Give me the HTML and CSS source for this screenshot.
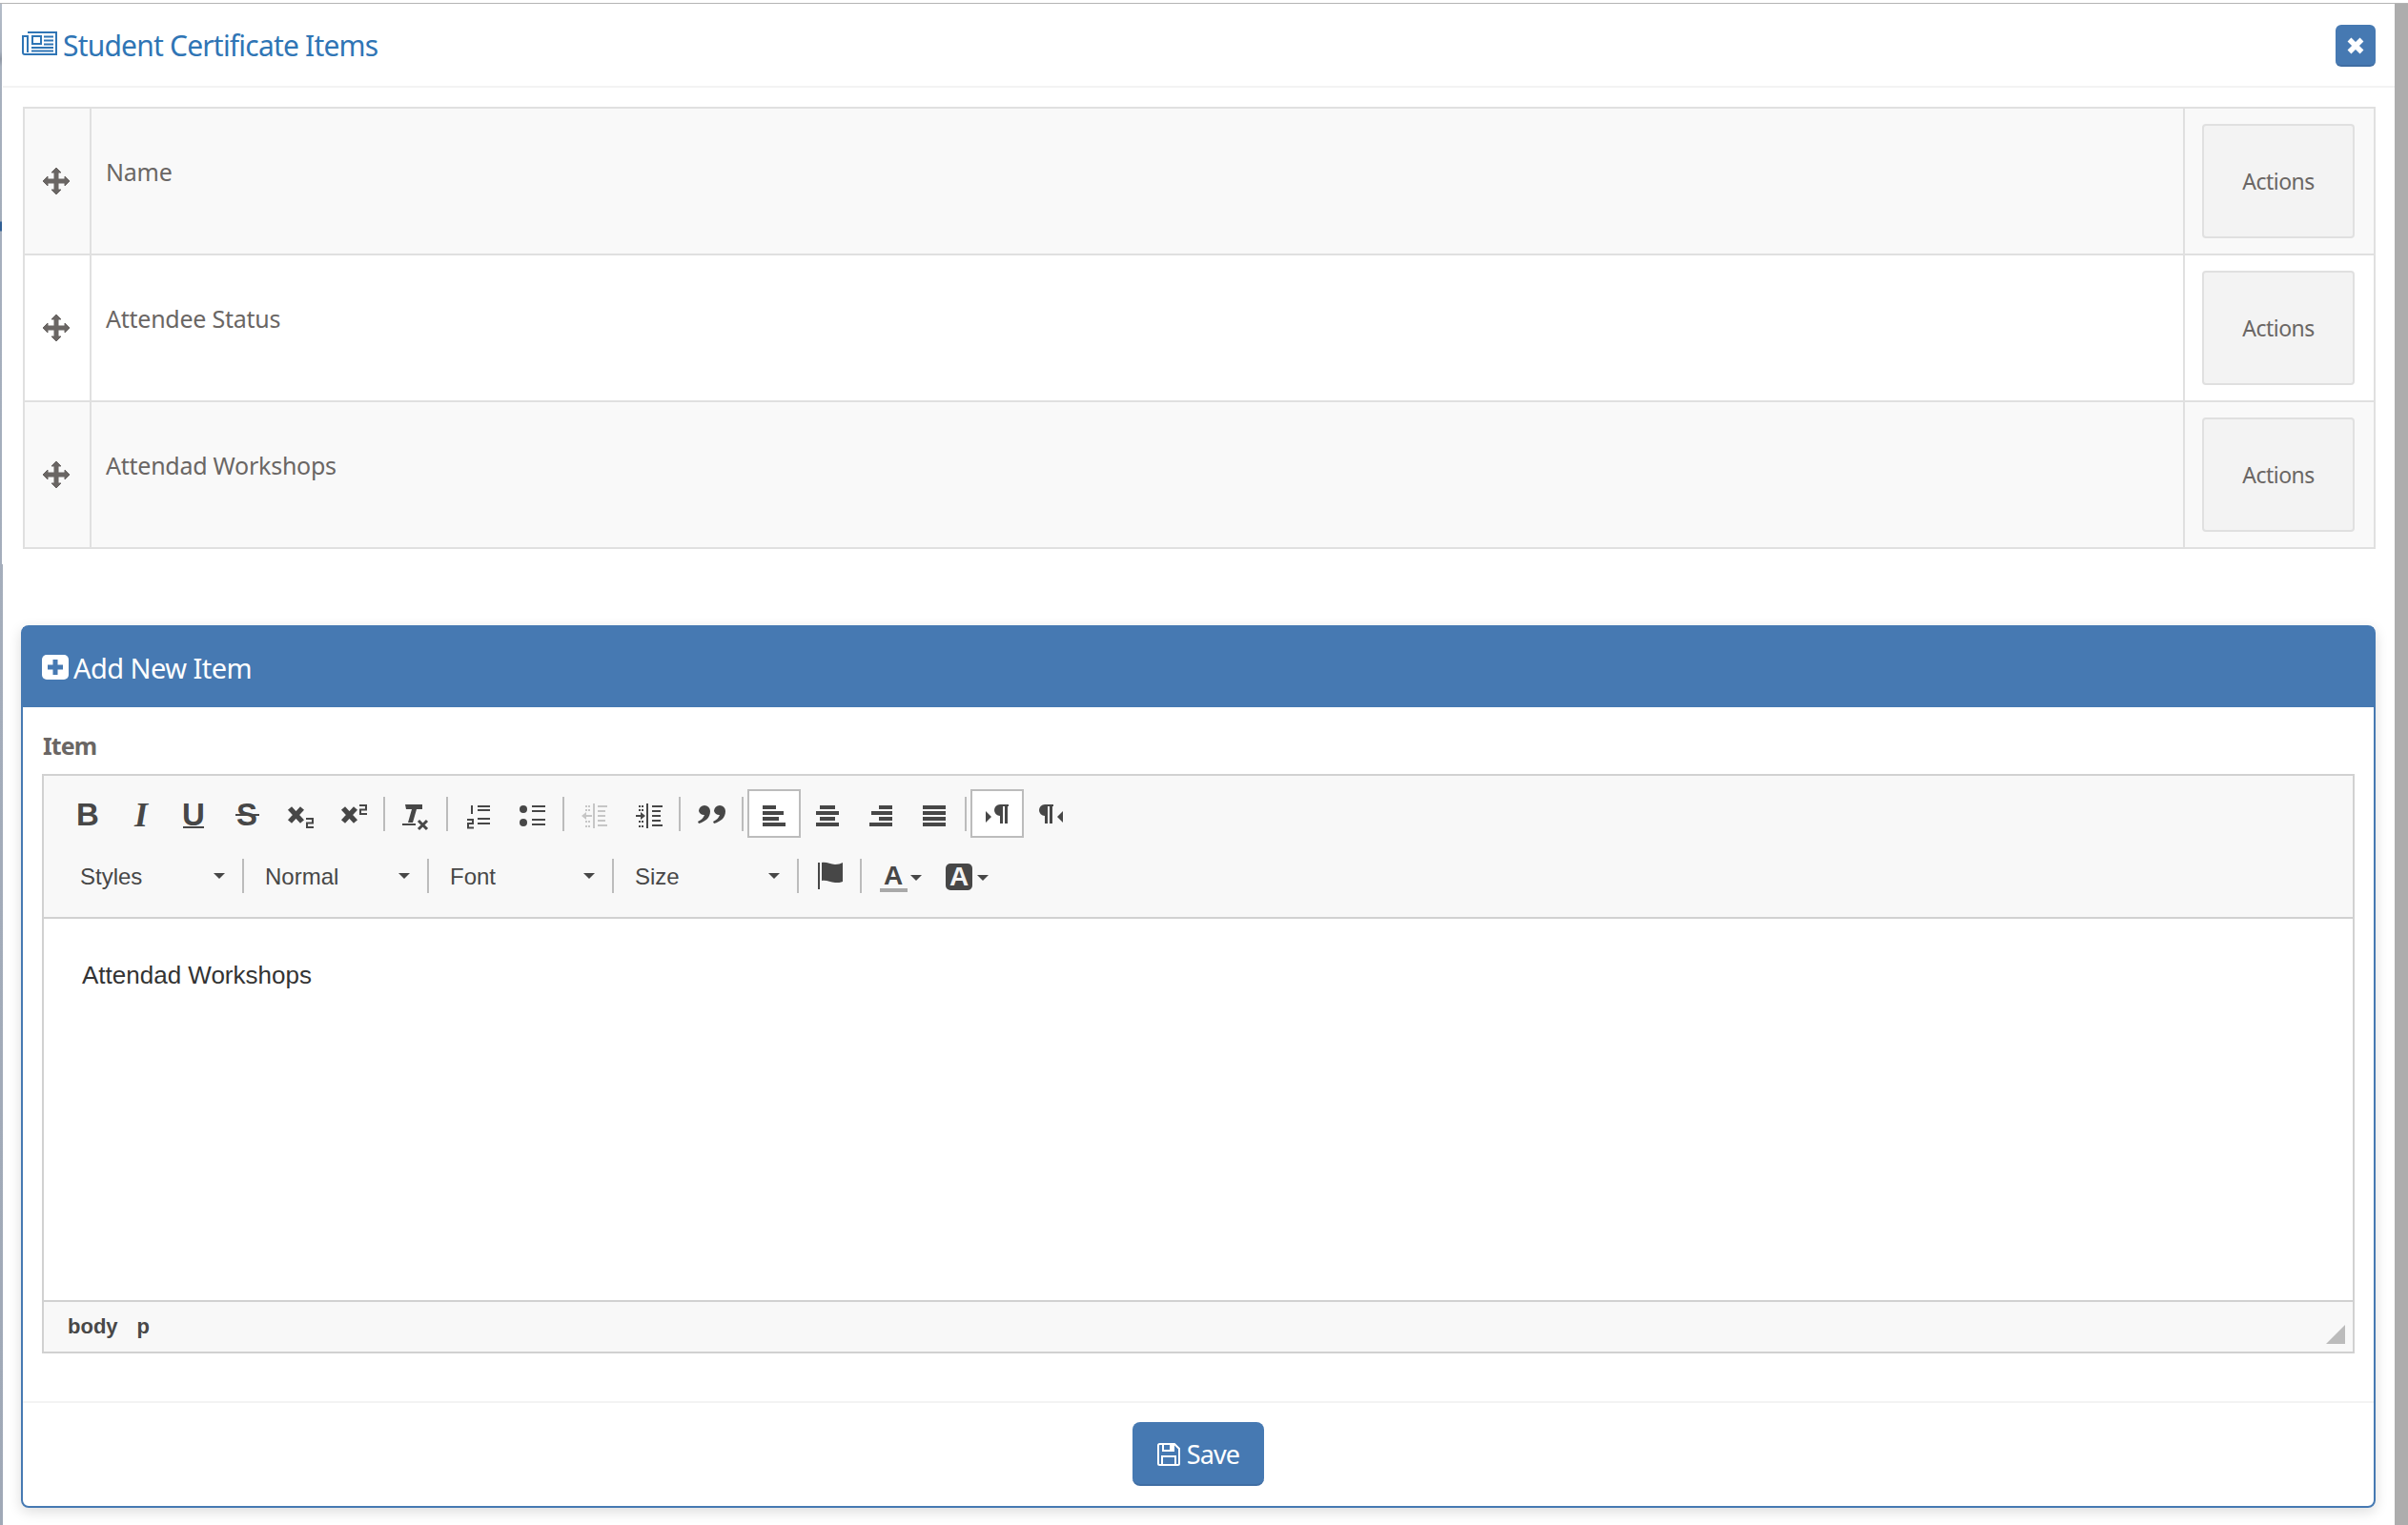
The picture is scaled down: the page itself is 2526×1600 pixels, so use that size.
FILE: index.html
```html
<!DOCTYPE html>
<html lang="en">
<head>
<meta charset="utf-8">
<title>Student Certificate Items</title>
<link rel="stylesheet" href="styles.css">
</head>
<body>
<div class="screen">
  <div class="backdrop"></div>
  <main class="modal">
    <header class="modal-head">
      <h1 class="title">
        <svg class="news" viewBox="0 0 37 26"><path d="M6 2h30v23H3a2 2 0 0 1-2-2V6h5v17" fill="none" stroke="currentColor" stroke-width="2"/><rect x="11" y="6" width="9" height="8" fill="none" stroke="currentColor" stroke-width="2"/><path d="M23 6.500h10M23 10.500h10M23 14.500h10M10 18h23M10 21.500h23" stroke="currentColor" stroke-width="2"/></svg>
        Student Certificate Items
      </h1>
      <button class="close" type="button" aria-label="Close"><svg viewBox="-9 -9 18 18" class="close-x"><path d="M-6.500 -6.500L6.500 6.500M6.500 -6.500L-6.500 6.500" stroke="#fff" stroke-width="5.500"/></svg></button>
    </header>

    <section class="items">
      <div class="row odd">
        <div class="cell handle"><svg class="move" viewBox="-14 -14 28 28"><use href="#move"/></svg></div>
        <div class="cell name">Name</div>
        <div class="cell act"><button class="actions" type="button">Actions</button></div>
      </div>
      <div class="row">
        <div class="cell handle"><svg class="move" viewBox="-14 -14 28 28"><use href="#move"/></svg></div>
        <div class="cell name">Attendee Status</div>
        <div class="cell act"><button class="actions" type="button">Actions</button></div>
      </div>
      <div class="row odd">
        <div class="cell handle"><svg class="move" viewBox="-14 -14 28 28"><use href="#move"/></svg></div>
        <div class="cell name">Attendad Workshops</div>
        <div class="cell act"><button class="actions" type="button">Actions</button></div>
      </div>
    </section>

    <section class="panel">
      <h2 class="panel-head">
        <svg class="plus" viewBox="0 0 28 26"><rect width="28" height="26" rx="5" fill="#fff"/><path d="M14 5v16M6 13h16" stroke="#4679b2" stroke-width="5"/></svg>
        Add New Item
      </h2>
      <div class="panel-body">
        <label class="label">Item</label>
        <div class="editor">
          <div class="toolbar">
            <div class="tool-row">
              <span class="btn"><svg class="ic" viewBox="-20 -20 40 40"><text class="g-b" x="0" y="12">B</text></svg></span>
              <span class="btn"><svg class="ic" viewBox="-20 -20 40 40"><text class="g-i" x="0" y="13">I</text></svg></span>
              <span class="btn"><svg class="ic" viewBox="-20 -20 40 40"><text class="g-b" x="-1" y="12">U</text><rect x="-12" y="13" width="22" height="2"/></svg></span>
              <span class="btn"><svg class="ic" viewBox="-20 -20 40 40"><text class="g-b" x="-1" y="12">S</text><rect x="-13" y="0" width="25" height="2"/></svg></span>
              <span class="btn"><svg class="ic" viewBox="-20 -20 40 40"><path class="st5" d="M-12 -6L1 8M1 -6L-12 8"/><path class="st2" d="M5 5h7v4.500h-6v4.500h7"/></svg></span>
              <span class="btn btn-last"><svg class="ic" viewBox="-20 -20 40 40"><path class="st5" d="M-12 -6L1 8M1 -6L-12 8"/><path class="st2" d="M5 -9h7v4.500h-6v4.500h7"/></svg></span>
              <i class="sep"></i>
              <span class="btn"><svg class="ic" viewBox="-20 -20 40 40"><path d="M-11 -10h18v5h-6l-4 14h-5l4 -14h-6z"/><rect x="-14" y="10" width="14" height="2"/><path class="st3" d="M3 7L12 16M12 7L3 16"/></svg></span>
              <i class="sep"></i>
              <span class="btn"><svg class="ic" viewBox="-20 -20 40 40"><path class="st2" d="M-7 -9v9M-1 -8h13M-1 -4h13M-1 5h13M-1 10h13M-12 6h6v4h-5v4.500h6"/></svg></span>
              <span class="btn"><svg class="ic" viewBox="-20 -20 40 40"><circle cx="-9" cy="-5" r="4"/><circle cx="-9" cy="9" r="4"/><path class="st2" d="M0 -8h14M0 -3h14M0 6h14M0 11h14"/></svg></span>
              <i class="sep"></i>
              <span class="btn"><svg class="ic off" viewBox="-20 -20 40 40"><path class="st2" d="M-1 -11v26M3 -8h10M3 -3h8M3 2h8M3 7h8M3 12h10"/><path class="st2" d="M-3 2h-8"/><path d="M-14 2l5 -4v8z"/><path class="dots" d="M-10 -8h5M-10 -4h5M-10 8h5M-10 13h5"/></svg></span>
              <span class="btn"><svg class="ic" viewBox="-20 -20 40 40"><path class="st2" d="M-1 -11v26M4 -8h11M4 -3h9M4 2h9M4 7h9M4 12h11"/><path class="st2" d="M-13 2h7"/><path d="M-3 2l-5 -4v8z"/><path class="dots" d="M-10 -8h5M-10 -4h5M-10 8h5M-10 13h5"/></svg></span>
              <i class="sep"></i>
              <span class="btn"><svg class="ic" viewBox="-20 -20 40 40"><path d="M-7 -9a6 6 0 0 1 6 6c0 7-5 11-12 13l-1-2c4-2 6-4 7-7a6 6 0 0 1-6-4a6 6 0 0 1 6-6z"/><path d="M9 -9a6 6 0 0 1 6 6c0 7-5 11-12 13l-1-2c4-2 6-4 7-7a6 6 0 0 1-6-4a6 6 0 0 1 6-6z"/></svg></span>
              <i class="sep"></i>
              <span class="btn on"><svg class="ic" viewBox="-20 -20 40 40"><rect x="-12" y="-9" width="14" height="4"/><rect x="-12" y="-3" width="22" height="4"/><rect x="-12" y="3" width="17" height="4"/><rect x="-12" y="9" width="24" height="4"/></svg></span>
              <span class="btn"><svg class="ic" viewBox="-20 -20 40 40"><rect x="-8" y="-9" width="16" height="4"/><rect x="-12" y="-3" width="24" height="4"/><rect x="-8" y="3" width="16" height="4"/><rect x="-12" y="9" width="24" height="4"/></svg></span>
              <span class="btn"><svg class="ic" viewBox="-20 -20 40 40"><rect x="-2" y="-9" width="14" height="4"/><rect x="-10" y="-3" width="22" height="4"/><rect x="-2" y="3" width="14" height="4"/><rect x="-12" y="9" width="24" height="4"/></svg></span>
              <span class="btn"><svg class="ic" viewBox="-20 -20 40 40"><rect x="-12" y="-9" width="24" height="4"/><rect x="-12" y="-3" width="24" height="4"/><rect x="-12" y="3" width="24" height="4"/><rect x="-12" y="9" width="24" height="4"/></svg></span>
              <i class="sep"></i>
              <span class="btn on"><svg class="ic" viewBox="-20 -20 40 40"><path d="M-12 -3l6 6l-6 6z"/><path d="M12 -10h-9a6 6 0 0 0 0 12h0v8h3v-18h2v18h3v-18h1z"/></svg></span>
              <span class="btn"><svg class="ic" viewBox="-20 -20 40 40"><path d="M13 -3l-6 6l6 6z"/><path d="M3 -10h-9a6 6 0 0 0 0 12h0v8h3v-18h2v18h3v-18h1z"/></svg></span>
            </div>
            <div class="tool-row row2">
              <span class="combo">Styles<i class="caret"></i></span>
              <i class="sep"></i>
              <span class="combo combo-n">Normal<i class="caret"></i></span>
              <i class="sep"></i>
              <span class="combo combo-n">Font<i class="caret"></i></span>
              <i class="sep"></i>
              <span class="combo combo-n">Size<i class="caret"></i></span>
              <i class="sep"></i>
              <span class="btn flagbtn"><svg class="ic" viewBox="-20 -20 40 40"><rect x="-12" y="-14" width="2" height="28"/><path d="M-8 -14c5 -1 9 2 14 2c3 0 6 -1 8 -2v20c-2 1 -5 1 -8 1c-5 0 -9 -3 -14 -2z"/></svg></span>
              <i class="sep"></i>
              <span class="btn colorbtn color-a"><svg class="ic wide" viewBox="-20 -20 64 40"><text class="g-a" x="9" y="9">A</text><rect x="-5" y="13" width="29" height="4" fill="#a9a9a9"/><path d="M27 -1h12l-6 6z"/></svg></span>
              <span class="btn colorbtn"><svg class="ic wide" viewBox="-20 -20 64 40"><rect x="-14" y="-13" width="28" height="28" rx="5"/><text class="g-a inv" x="0" y="10">A</text><path d="M19 -1h12l-6 6z"/></svg></span>
            </div>
          </div>
          <div class="ed-body"><p>Attendad Workshops</p></div>
          <div class="ed-path"><span>body</span><span>p</span><i class="grip"></i></div>
        </div>
      </div>
      <footer class="panel-foot">
        <button class="save" type="button">
          <svg class="disk" viewBox="0 0 24 24"><path d="M1 2.500a1.500 1.500 0 0 1 1.500-1.500H18l5 5v15.500a1.500 1.500 0 0 1-1.500 1.500H2.500A1.500 1.500 0 0 1 1 21.500z" fill="none" stroke="#fff" stroke-width="2"/><path d="M6 1v7h11V1M5 23v-9h14v9" fill="none" stroke="#fff" stroke-width="2"/><rect x="13" y="2" width="3" height="5" fill="#fff"/></svg>
          Save
        </button>
      </footer>
    </section>
  </main>
  <div class="rail"></div>
</div>
<svg class="defs" width="0" height="0"><defs><path id="move" d="M0 -14l5 5h-3v7h7v-3l5 5l-5 5v-3h-7v7h3l-5 5l-5 -5h3v-7h-7v3l-5 -5l5 -5v3h7v-7h-3z" fill="#6a6664" stroke="#6a6664" stroke-width="1" stroke-linejoin="round"/></defs></svg>
</body>
</html>
```

FILE: styles.css
```css
* { box-sizing: border-box; }
html, body { margin: 0; height: 1600px; background: #fff; overflow: hidden; }
body { padding-top: 3px; font-family: "Noto Sans", sans-serif; color: #666; }
.defs { position: absolute; }

.screen { display: flex; height: 1597px; border-top: 1px solid #b4b4b4; }
.backdrop { position: relative; width: 3px; background: linear-gradient(#b4bcc8 0, #a8b1be 50px, #8f97a3 58px, #a8b1be 66px, #a4adba 228px, #2f5f95 229px, #2f5f95 238px, #a6afbd 239px, #a0a9b7 100%); }
.backdrop::after { content: ""; position: absolute; top: 0; right: 0; width: 1px; height: 588px; background: #fff; }
.rail { width: 14px; background: #adadad; }
.modal { flex: 1; min-width: 0; background: #fff; padding: 0 20px 0 19px; }

.modal-head { display: flex; align-items: center; justify-content: space-between; height: 88px; margin: 0 -20px 0 -19px; padding: 0 20px 0 20px; border-bottom: 2px solid #f3f3f3; }
.title { display: flex; align-items: center; margin: 0; font-size: 30px; font-weight: 400; letter-spacing: -0.8px; color: #2f75b5; }
.news { width: 37px; height: 26px; margin-right: 6px; margin-top: -4px; }
.close { width: 42px; height: 44px; margin-top: 2px; padding: 2px 0 0; display: flex; align-items: center; justify-content: center; background: #4679b2; border: 0; border-bottom: 2px solid #3f6da3; border-radius: 6px; }
.close-x { width: 18px; height: 18px; }

.items { margin: 20px 0 80px 2px; border-top: 2px solid #e0e0e0; border-left: 2px solid #e0e0e0; }
.row { display: grid; grid-template-columns: 70px 1fr 200px; height: 154px; background: #fff; }
.row.odd { background: #f9f9f9; }
.cell { border-right: 2px solid #e0e0e0; border-bottom: 2px solid #e0e0e0; }
.handle { display: flex; align-items: center; justify-content: center; }
.move { width: 28px; height: 28px; margin-left: -2px; }
.name { padding: 48px 16px 0 15px; font-size: 25px; line-height: 36px; letter-spacing: -0.25px; color: #6a6664; }
.act { padding: 16px 0 0 18px; }
.actions { display: block; width: 160px; height: 120px; padding: 0; background: #f3f3f3; border: 2px solid #e0e0e0; border-radius: 4px; font: 23px "Noto Sans", sans-serif; letter-spacing: -0.55px; color: #6a6664; }

.panel { border: 2px solid #4679b2; border-radius: 8px; box-shadow: 0 4px 14px rgba(0,0,0,.14); }
.panel-head { display: flex; align-items: center; height: 84px; margin: 0; padding: 0 0 0 20px; background: #4679b2; font-size: 29px; font-weight: 400; letter-spacing: -0.55px; color: #fff; }
.plus { width: 28px; height: 26px; margin-right: 5px; }
.panel-body { padding: 22px 20px 50px; }
.label { display: block; height: 48px; padding-left: 1px; font-size: 25px; font-weight: 700; line-height: 36px; letter-spacing: -0.9px; color: #6a6664; }

.editor { border: 2px solid #d1d1d1; font-family: "Liberation Sans", Arial, sans-serif; color: #474747; }
.toolbar { height: 150px; padding: 14px 0 0 18px; background: #f8f8f8; border-bottom: 2px solid #d1d1d1; }
.tool-row { display: flex; align-items: center; height: 51px; }
.row2 { margin-top: 14px; height: 52px; margin-left: -2px; }
.btn { display: flex; align-items: center; justify-content: center; flex: none; width: 56px; height: 51px; }
.btn-last { margin-right: -2px; }
.btn.on { background: #fff; border: 2px solid #bcbcbc; }
.sep { flex: none; width: 2px; height: 36px; margin: 0 4px; background: #bcbcbc; }
.ic { display: block; width: 40px; height: 40px; fill: #474747; overflow: visible; }
.ic.wide { width: 64px; }
.ic.off { fill: #c6c6c6; }
.ic.off .st2, .ic.off .dots { stroke: #c6c6c6; }
.st5, .st3, .st2 { fill: none; stroke: #474747; }
.st5 { stroke-width: 5.5; }
.st3 { stroke-width: 3; }
.st2 { stroke-width: 2; }
.dots { fill: none; stroke: #474747; stroke-width: 2; stroke-dasharray: 2 1; }
.g-b { font: 700 33px "Liberation Sans", Arial, sans-serif; text-anchor: middle; }
.g-i { font: italic 700 36px "Liberation Serif", serif; text-anchor: middle; }
.g-a { font: 700 28px "Liberation Sans", Arial, sans-serif; text-anchor: middle; }
.g-a.inv { fill: #f4f4f4; }

.combo { display: flex; align-items: center; justify-content: space-between; flex: none; width: 192px; height: 52px; padding: 2px 18px 0 22px; font-size: 24px; margin-right: -4px; }
.combo-n { margin-left: -4px; }
.caret { width: 0; height: 0; margin-top: -2px; border: 6px solid transparent; border-top-color: #474747; border-bottom: 0; }
.flagbtn { width: 64px; margin: 0 -4px; }
.colorbtn { width: 64px; justify-content: flex-start; }
.color-a { width: 78px; }

.ed-body { height: 402px; padding: 41px 0 0 40px; background: #fff; border-bottom: 2px solid #d1d1d1; font-size: 26px; color: #333; }
.ed-body p { margin: 0; line-height: 36px; }
.ed-path { position: relative; display: flex; align-items: center; gap: 20px; height: 52px; padding-left: 25px; background: #f8f8f8; font-size: 22px; font-weight: 700; color: #484848; }
.grip { position: absolute; right: 8px; bottom: 8px; width: 0; height: 0; border-style: solid; border-width: 0 0 20px 20px; border-color: transparent transparent #bbb transparent; }

.panel-foot { display: flex; justify-content: center; padding: 20px 0 21px; border-top: 2px solid #f3f3f3; }
.save { display: flex; align-items: center; justify-content: center; gap: 7px; width: 138px; height: 67px; padding: 2px 0 0; background: #4679b2; border: 0; border-bottom: 2px solid #3f6da3; border-radius: 8px; font: 27px "Noto Sans", sans-serif; letter-spacing: -0.9px; color: #fff; }
.disk { width: 24px; height: 24px; }
```
